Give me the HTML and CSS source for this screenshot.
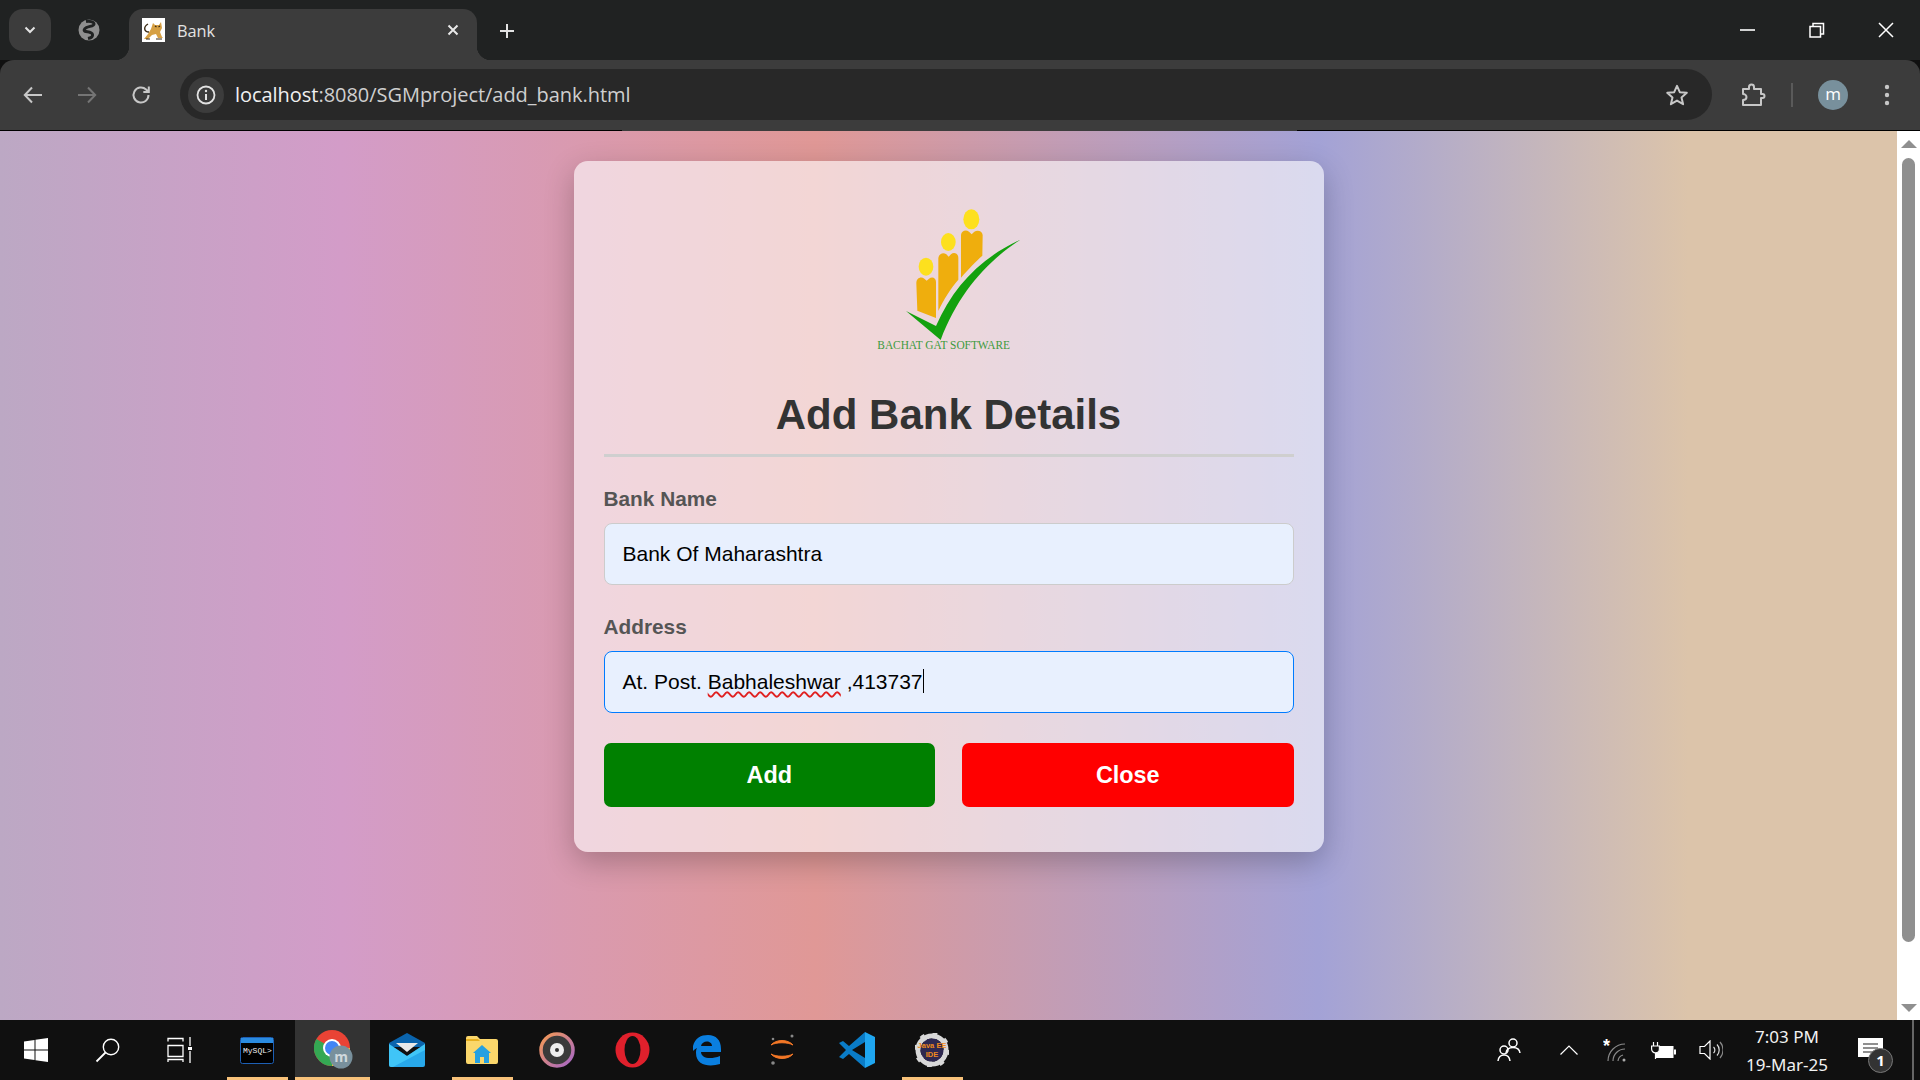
FILE: index.html
```html
<!DOCTYPE html>
<html lang="en">
<head>
<meta charset="utf-8">
<title>Bank</title>
<link rel="stylesheet" href="styles.css">
</head>
<body>
<div class="screen">
  <header class="tabstrip">
    <div class="tab-search">
      <svg width="14" height="14" viewBox="0 0 14 14"><path d="M2.500 4.500 7 9l4.500-4.500" fill="none" stroke="#e3e3e3" stroke-width="2"/></svg>
    </div>
    <div class="tab-group">
      <svg width="22" height="22" viewBox="0 0 22 22"><circle cx="11" cy="11" r="10.500" fill="#8f8f8f"/><path d="M8 2.500c3-.5 8 0 8 2.500s-5 2-7.500 3.500S5 12 8 12.500s6 .5 6.500 3-2 3.500-4.500 4" fill="none" stroke="#202222" stroke-width="3"/></svg>
    </div>
    <div class="tab">
      <svg class="favicon" width="23" height="24" viewBox="0 0 23 24"><rect width="23" height="24" fill="#fff"/><path d="M11 5l2 2h4l2-3 1 6-2 4 2 5 1 1h-5l-2-4-4 1-4 4H2l4-5 3-5z" fill="#d6a044"/><path d="M7 14C2 14 1 9 6 6" fill="none" stroke="#3a2a14" stroke-width="1.400"/><path d="M13 8l1.500 1M18 8l-1.500 1M4 21h4M14 21h6" stroke="#3a2a14" stroke-width="1.200"/></svg>
      <span class="tab-title">Bank</span>
      <svg class="tab-close" width="14" height="14" viewBox="0 0 14 14"><path d="M2.500 2.500l9 9M11.500 2.500l-9 9" stroke="#e8e8e8" stroke-width="2"/></svg>
    </div>
    <svg class="new-tab" width="18" height="18" viewBox="0 0 18 18"><path d="M9 2v14M2 9h14" stroke="#e3e3e3" stroke-width="2"/></svg>
    <div class="win-controls">
      <svg width="16" height="16" viewBox="0 0 16 16"><path d="M0 8h15" stroke="#fff" stroke-width="1.600"/></svg>
      <svg width="16" height="16" viewBox="0 0 16 16"><path d="M1 4.500h10.500V15H1zM4 4V1.500h10.500V12H12" fill="none" stroke="#fff" stroke-width="1.500"/></svg>
      <svg width="16" height="16" viewBox="0 0 16 16"><path d="M1 1l14 14M15 1L1 15" stroke="#fff" stroke-width="1.500"/></svg>
    </div>
  </header>

  <nav class="toolbar">
    <svg class="tool" width="22" height="22" viewBox="0 0 22 22"><path d="M20 11H3M10 3.500 2.800 11l7.200 7.500" fill="none" stroke="#c7c7c7" stroke-width="2"/></svg>
    <svg class="tool" width="22" height="22" viewBox="0 0 22 22"><path d="M2 11h17M12 3.500l7.200 7.500-7.200 7.500" fill="none" stroke="#757575" stroke-width="2"/></svg>
    <svg class="tool" width="22" height="22" viewBox="0 0 22 22"><path d="M18.500 11a7.500 7.500 0 1 1-2.400-5.500L18.500 8M18.800 2.500V8h-5.500" fill="none" stroke="#c7c7c7" stroke-width="2"/></svg>
    <div class="omnibox">
      <span class="site-info">
        <svg width="20" height="20" viewBox="0 0 20 20"><circle cx="10" cy="10" r="8.500" fill="none" stroke="#e3e3e3" stroke-width="1.800"/><path d="M10 9v6" stroke="#e3e3e3" stroke-width="2"/><circle cx="10" cy="6" r="1.200" fill="#e3e3e3"/></svg>
      </span>
      <span class="url">localhost<span class="url-dim">:8080/SGMproject/add_bank.html</span></span>
      <svg class="star" width="24" height="24" viewBox="0 0 24 24"><path d="M12 2.800l2.800 6.400 7 .6-5.300 4.600 1.600 6.800-6.100-3.600-6.100 3.600 1.600-6.800-5.300-4.600 7-.6z" fill="none" stroke="#c7c7c7" stroke-width="2" stroke-linejoin="round"/></svg>
    </div>
    <svg class="puzzle" width="26" height="26" viewBox="0 0 26 26"><path d="M3 7h6V5a2.500 2.500 0 0 1 5 0v2h7v5h1.500a2 2 0 0 1 0 4H21v7H3v-5c3 0 3.500-1.500 3.500-3S5 12 3 12z" fill="none" stroke="#c7c7c7" stroke-width="2" stroke-linejoin="round"/></svg>
    <span class="tool-divider"></span>
    <span class="avatar">m</span>
    <svg class="menu" width="6" height="24" viewBox="0 0 6 24"><circle cx="3" cy="4" r="2.200" fill="#c7c7c7"/><circle cx="3" cy="12" r="2.200" fill="#c7c7c7"/><circle cx="3" cy="20" r="2.200" fill="#c7c7c7"/></svg>
  </nav>

  <div class="viewport">
    <main class="page">
      <form class="card">
        <svg class="logo" width="218" height="179" viewBox="0 3 654 537">
          <ellipse cx="394" cy="88" rx="24" ry="30" fill="#fde01e"/>
          <ellipse cx="325" cy="156" rx="22" ry="27" fill="#fde01e"/>
          <ellipse cx="258" cy="230" rx="22" ry="27" fill="#fde01e"/>
          <path d="M363 135c1-12 14-17 24-10l8 8 8-8c10-6 24-2 25 10l-1 62c-18 16-42 40-64 66z" fill="#efae0d"/>
          <path d="M295 205c1-13 14-20 24-12l7 7 7-7c9-8 22-2 22 10v66c-22 24-44 60-60 94z" fill="#efae0d"/>
          <path d="M229 280c0-16 14-22 24-14l7 6 7-6c9-7 21-3 21 10v108l-56-22z" fill="#efae0d"/>
          <path d="M198 363 288 408C340 290 420 205 541 149 440 215 355 310 302 450z" fill="#13a10e"/>
          <text x="112" y="477" class="logo-text" textLength="398" lengthAdjust="spacingAndGlyphs">BACHAT GAT SOFTWARE</text>
        </svg>
        <h1 class="title">Add Bank Details</h1>
        <div class="field">
          <label class="label">Bank Name</label>
          <div class="input">Bank Of Maharashtra</div>
        </div>
        <div class="field">
          <label class="label">Address</label>
          <div class="input input-focus">At. Post. <span class="misspelt">Babhaleshwar</span> ,413737<span class="caret"></span></div>
        </div>
        <div class="actions">
          <button type="button" class="btn btn-add">Add</button>
          <button type="button" class="btn btn-close">Close</button>
        </div>
      </form>
    </main>
    <aside class="scrollbar">
      <span class="arrow-up"></span>
      <span class="thumb"></span>
      <span class="arrow-down"></span>
    </aside>
  </div>

  <footer class="taskbar">
    <div class="sys-slot">
      <svg width="24" height="24" viewBox="0 0 24 24"><path d="M0 3.500 10.500 2v9.500H0zM11.500 1.800 24 0v11.500H11.500zM0 12.500h10.500V22L0 20.500zM11.500 12.500H24V24l-12.500-1.800z" fill="#fff"/></svg>
    </div>
    <div class="sys-slot">
      <svg width="26" height="26" viewBox="0 0 26 26"><circle cx="16" cy="10" r="7.700" fill="none" stroke="#fff" stroke-width="1.400"/><path d="M10.500 15.500 1.500 24.500" stroke="#fff" stroke-width="1.800"/></svg>
    </div>
    <div class="sys-slot">
      <svg width="26" height="26" viewBox="0 0 26 26"><path d="M1 4.500V1.500h15v3M1 8.500h15v11H1zM1 25v-2.500h15V25M23 0v9M23 14v12" fill="none" stroke="#fff" stroke-width="1.300"/><rect x="21" y="10" width="4" height="3" fill="#fff"/></svg>
    </div>
    <div class="app running">
      <svg width="34" height="27" viewBox="0 0 34 27"><rect x=".5" y=".5" width="33" height="26" rx="2" fill="#000" stroke="#1d5fb4"/><rect x="1" y="1" width="32" height="5" fill="#2a8be0"/><text x="3" y="16" class="mysql-text">MySQL&gt;</text></svg>
    </div>
    <div class="app active">
      <span class="chrome-wrap">
        <svg width="46" height="40" viewBox="0 0 46 40"><circle cx="18" cy="18" r="18" fill="#e94335"/><path d="M18 18 2.400 9A18 18 0 0 0 18 36l9-15z" fill="#34a853"/><path d="M18 18h18A18 18 0 0 1 18 36z" fill="#fbc02d"/><circle cx="18" cy="18" r="9" fill="#fff"/><circle cx="18" cy="18" r="7" fill="#4285f4"/><circle cx="27" cy="27" r="11.500" fill="#78909c"/><text x="27" y="32" class="chrome-m">m</text></svg>
      </span>
    </div>
    <div class="app">
      <svg width="36" height="34" viewBox="0 0 36 34"><path d="M0 10 18 0l18 10v4H0z" fill="#0a64ad"/><path d="M7 10h22l-11 9z" fill="#e8e8e8"/><path d="M0 11 18 23 36 11v21a2 2 0 0 1-2 2H2a2 2 0 0 1-2-2z" fill="#28a8ea"/><path d="M0 11l18 12 18-12v6L4 34H2a2 2 0 0 1-2-2z" fill="#50d9ff" opacity=".6"/></svg>
    </div>
    <div class="app running">
      <svg width="32" height="28" viewBox="0 0 32 28"><path d="M0 2a2 2 0 0 1 2-2h9l3 3h16a2 2 0 0 1 2 2v21a2 2 0 0 1-2 2H2a2 2 0 0 1-2-2z" fill="#fbd76b"/><path d="M0 3h12l2 2H0z" fill="#e8b020"/><path d="M9 27V15h14v12h-5v-6h-4v6z" fill="#26a0e0"/><path d="M7 17l9-8 9 8z" fill="#26a0e0"/></svg>
    </div>
    <div class="app">
      <svg width="36" height="36" viewBox="0 0 36 36"><defs><linearGradient id="ring" x1="0" y1="0" x2="1" y2="1"><stop offset="0" stop-color="#f59a52"/><stop offset="1" stop-color="#a566c9"/></linearGradient></defs><circle cx="18" cy="18" r="16" fill="#3a3a3a" stroke="url(#ring)" stroke-width="3.500"/><circle cx="18" cy="18" r="7" fill="#eee"/><circle cx="18" cy="18" r="2" fill="#333"/></svg>
    </div>
    <div class="app">
      <svg width="35" height="36" viewBox="0 0 35 36"><ellipse cx="17.500" cy="18" rx="17" ry="17.500" fill="#e0202c"/><ellipse cx="17.500" cy="18" rx="8" ry="14" fill="#111"/></svg>
    </div>
    <div class="app">
      <svg width="30" height="32" viewBox="0 0 30 32"><path d="M1 12C3 4 9 1 16 1c8 0 13 5 13 14v3H9c0 6 9 8 19 4v8c-10 3-24 2-24-11 0-2 0-3 1-5-2 1-3 2-4 3zM9 12h11c0-6-10-6-11 0z" fill="#0a7fe0"/></svg>
    </div>
    <div class="app">
      <svg width="26" height="32" viewBox="0 0 26 32"><path d="M2 11c5-6 17-6 22 0-5-3-17-3-22 0zM2 20c5 6 17 6 22 0-5 3-17 3-22 0z" fill="#f37726" stroke="#f37726"/><circle cx="4" cy="5" r="1.300" fill="#888"/><circle cx="23" cy="2" r="1.500" fill="#888"/><circle cx="4" cy="29" r="1.800" fill="#888"/></svg>
    </div>
    <div class="app">
      <svg width="36" height="36" viewBox="0 0 36 36"><path d="M26 0 36 5v26l-10 5z" fill="#1fa6f0"/><path d="M26 0v10L13 18l13 8v10L10 22l-6 5-4-2 7-7-7-7 4-2 6 5z" fill="#0a7cc7"/></svg>
    </div>
    <div class="app running">
      <svg width="34" height="34" viewBox="0 0 34 34"><circle cx="17" cy="17" r="14" fill="none" stroke="#d8d8d8" stroke-width="5"/><circle cx="17" cy="17" r="14" fill="none" stroke="#d8d8d8" stroke-width="8" stroke-dasharray="4 7.000"/><circle cx="17" cy="17" r="11.500" fill="#2e2850"/><text x="17" y="15" class="ide-text">Java EE</text><text x="17" y="24" class="ide-text">IDE</text></svg>
    </div>
    <div class="tray">
      <svg class="tray-people" width="24" height="26" viewBox="0 0 24 26"><circle cx="16" cy="6" r="4" fill="none" stroke="#fff" stroke-width="1.500"/><path d="M9 16c.5-4 3-5.500 7-5.500s6.500 1.500 7 5.500" fill="none" stroke="#fff" stroke-width="1.500"/><circle cx="7" cy="13" r="4" fill="none" stroke="#fff" stroke-width="1.500"/><path d="M1 24c.5-4 2.500-6 6-6s5.500 2 6 6" fill="none" stroke="#fff" stroke-width="1.500"/></svg>
      <svg class="tray-chevron" width="18" height="10" viewBox="0 0 18 10"><path d="M.5 9.500 9 1l8.500 8.500" fill="none" stroke="#fff" stroke-width="1.200"/></svg>
      <svg class="tray-wifi" width="24" height="23" viewBox="0 0 24 23"><text x="0" y="13" class="wifi-star">*</text><path d="M5 22a17 17 0 0 1 17-17M10 22a12 12 0 0 1 12-12M15 22a7 7 0 0 1 5-6" fill="none" stroke="#8a8a8a" stroke-width="1.200"/><circle cx="21" cy="21" r="1.500" fill="#aaa"/></svg>
      <svg class="tray-battery" width="25" height="17" viewBox="0 0 25 17"><rect x="5" y="4.500" width="17" height="11" fill="#fff" stroke="#fff"/><rect x="23" y="7.500" width="2" height="5" fill="#fff"/><path d="M.6 4h7.800v3a3.900 3.900 0 0 1-7.800 0z" fill="#101010" stroke="#fff" stroke-width="1.200"/><path d="M2.500 0v4M6.500 0v4M4.500 11v6" stroke="#fff" stroke-width="1.200" fill="none"/></svg>
      <svg class="tray-volume" width="24" height="20" viewBox="0 0 24 20"><path d="M1 6.500h4.500L11 1v18l-5.500-5.500H1z" fill="none" stroke="#fff" stroke-width="1.200"/><path d="M14.500 7a4 4 0 0 1 0 6M18 4.500a8 8 0 0 1 0 11" fill="none" stroke="#ddd" stroke-width="1.200"/><path d="M21 2a12 12 0 0 1 0 16" fill="none" stroke="#888" stroke-width="1.200"/></svg>
      <div class="clock"><span>7:03 PM</span><span>19-Mar-25</span></div>
      <div class="notify">
        <svg width="25" height="24" viewBox="0 0 25 24"><path d="M0 0h25v19h-9l-5 5v-5H0z" fill="#fff"/><path d="M5 6h15M5 10h15M5 14h10" stroke="#222" stroke-width="1.200"/></svg>
        <span class="badge">1</span>
      </div>
      <span class="show-desktop"></span>
    </div>
  </footer>
</div>
</body>
</html>
```

FILE: styles.css
```css
* { box-sizing: border-box; }
html, body { margin: 0; height: 100%; overflow: hidden; }
body { font-family: "Liberation Sans", Arial, sans-serif; background: #101010; }
svg { display: block; flex: none; }

.screen { width: 1920px; height: 1080px; display: flex; flex-direction: column; }

/* tab strip */
.tabstrip { height: 60px; background: #202222; display: flex; align-items: flex-end; padding-left: 9px; position: relative; flex: none; }
.tab-search { width: 42px; height: 42px; margin-bottom: 9px; background: #3c3c3c; border-radius: 14px; display: flex; align-items: center; justify-content: center; }
.tab-group { width: 78px; height: 51px; display: flex; align-items: center; justify-content: center; padding: 0 2px 9px 0; }
.tab { width: 348px; height: 51px; background: #3c3c3c; border-radius: 14px 14px 0 0; display: flex; align-items: center; padding: 0 17px 9px 13px; position: relative; }
.tab::before, .tab::after { content: ""; position: absolute; bottom: 0; width: 14px; height: 14px; background: radial-gradient(circle at 0 0, #202222 14px, #3c3c3c 14.500px); }
.tab::before { left: -14px; }
.tab::after { right: -14px; transform: scaleX(-1); }
.tab-title { margin-left: 12px; flex: 1; font: 17px "Open Sans", sans-serif; color: #e3e3e3; transform: scaleX(.96); transform-origin: left; }
.new-tab { margin: 0 0 20px 21px; }
.win-controls { margin-left: auto; display: flex; gap: 53px; padding: 0 26px 22px 0; }

/* toolbar */
.toolbar { height: 71px; flex: none; background: #3c3c3c; border-bottom: 1px solid #000; border-radius: 14px 14px 0 0; display: flex; align-items: center; padding: 0 22px 1px 22px; position: relative; }
.toolbar::after { content: ""; position: absolute; left: 622px; width: 675px; bottom: -1px; height: 1px; background: #3c3c3c; }
.tool { margin-right: 32px; }
.omnibox { width: 1532px; height: 51px; margin-left: -4px; border-radius: 26px; background: #282828; display: flex; align-items: center; padding: 0 23px 0 8px; }
.site-info { width: 36px; height: 36px; border-radius: 50%; background: #3c3c3c; display: flex; align-items: center; justify-content: center; }
.url { margin-left: 11px; flex: 1; font: 20px "Open Sans", sans-serif; color: #f0f0f0; white-space: nowrap; letter-spacing: -.04px; }
.url-dim { color: #cfcfcf; }
.puzzle { margin-left: 28px; }
.tool-divider { width: 2px; height: 24px; margin-left: 25px; background: #5a5a5a; }
.avatar { width: 30px; height: 30px; margin-left: 25px; border-radius: 50%; background: #78909c; color: #fff; font: 17px/28px "Open Sans", sans-serif; text-align: center; }
.menu { margin-left: 36px; }

/* page */
.viewport { flex: 1; min-height: 0; display: flex; }
.page { flex: 1; padding-top: 30px; display: flex; flex-direction: column; align-items: center;
  background: linear-gradient(90deg, #bca8c4 0%, #d39cc8 18%, #e09896 43%, #a3a2d6 69.500%, #dcc4aa 89%, #dcc4aa 100%); }
.card { width: 750px; height: 691px; padding: 30px 30px 0; border-radius: 14px; background: rgba(255,255,255,.6); box-shadow: 0 10px 30px rgba(0,0,0,.24); display: flex; flex-direction: column; }
.logo { align-self: center; }
.logo-text { font: 36px "Liberation Serif", serif; fill: #3c9a3c; }
.title { margin: 20px 0 0; padding-bottom: 15px; border-bottom: 3px solid #cfcfcf; height: 67px; font-size: 42px; line-height: 49px; font-weight: 700; color: #333; text-align: center; }
.field { margin-top: 29px; display: flex; flex-direction: column; }
.label { font-size: 20.800px; line-height: 24px; padding-top: 1px; height: 25px; font-weight: 700; color: #555; margin-bottom: 12px; }
.input { height: 62px; padding: 0 18px; border: 1px solid #ccc; border-radius: 8px; background: #e8f0fe; color: #000; font-size: 21px; line-height: 60px; white-space: nowrap; }
.input-focus { border-color: #007bff; }
.misspelt { text-decoration: underline wavy #e02020 1.500px; text-underline-offset: 2px; }
.caret { display: inline-block; width: 1px; height: 24px; background: #000; vertical-align: -4px; }
.actions { margin-top: 30px; display: grid; grid-template-columns: 1fr 1fr; gap: 27px; }
.btn { height: 64px; border: 0; border-radius: 7px; color: #fff; font: 700 23.400px "Liberation Sans", sans-serif; }
.btn-add { background: #008000; }
.btn-close { background: #f00; }

/* scrollbar */
.scrollbar { width: 23px; background: #fff; display: flex; flex-direction: column; align-items: center; padding-top: 9px; }
.arrow-up, .arrow-down { width: 0; height: 0; border-left: 8px solid transparent; border-right: 8px solid transparent; }
.arrow-up { border-bottom: 8px solid #8f8f8f; }
.arrow-down { border-top: 8px solid #8f8f8f; margin-top: 62px; }
.thumb { width: 13px; height: 784px; margin-top: 10px; border-radius: 7px; background: #8f8f8f; }

/* taskbar */
.taskbar { height: 60px; flex: none; background: #101010; display: flex; align-items: stretch; }
.sys-slot { width: 72px; display: flex; align-items: center; justify-content: center; }
.app { width: 75px; display: flex; align-items: center; justify-content: center; position: relative; }
.app:nth-child(4) { margin-left: 3.500px; }
.running::after, .active::after { content: ""; position: absolute; left: 7px; right: 7px; bottom: 0; height: 3px; background: #f8c27a; }
.active { background: #333; }
.active::after { left: 0; right: 0; }
.chrome-wrap { margin-left: 10px; }
.mysql-text { font: 8px "Liberation Mono", monospace; fill: #eee; }
.chrome-m { font: 700 14px "Open Sans", sans-serif; fill: #cfd8dc; text-anchor: middle; }
.ide-text { font: 700 7.500px "Liberation Sans", sans-serif; fill: #f08a1d; text-anchor: middle; }
.tray { margin-left: auto; display: flex; align-items: center; position: relative; }
.tray-people { margin-right: 38.500px; }
.tray-chevron { margin-right: 25.500px; }
.tray-wifi { margin-right: 24px; }
.tray-battery { margin-right: 23px; }
.tray-volume { margin-right: 22px; }
.wifi-star { font: 700 18px "Liberation Sans", sans-serif; fill: #fff; }
.clock { width: 84px; display: flex; flex-direction: column; align-items: center; gap: 9px; color: #f2f2f2; font: 17px/19px "Noto Sans", sans-serif; white-space: nowrap; margin-right: 29px; }
.notify { position: relative; margin-right: 37px; }
.badge { position: absolute; left: 10px; top: 10px; width: 25px; height: 25px; border-radius: 50%; background: #333; border: 1px solid #777; color: #fff; font: 700 15px/23px "Noto Sans", sans-serif; text-align: center; }
.show-desktop { position: absolute; right: 6px; top: 0; bottom: 0; width: 2px; background: #666; }
```
